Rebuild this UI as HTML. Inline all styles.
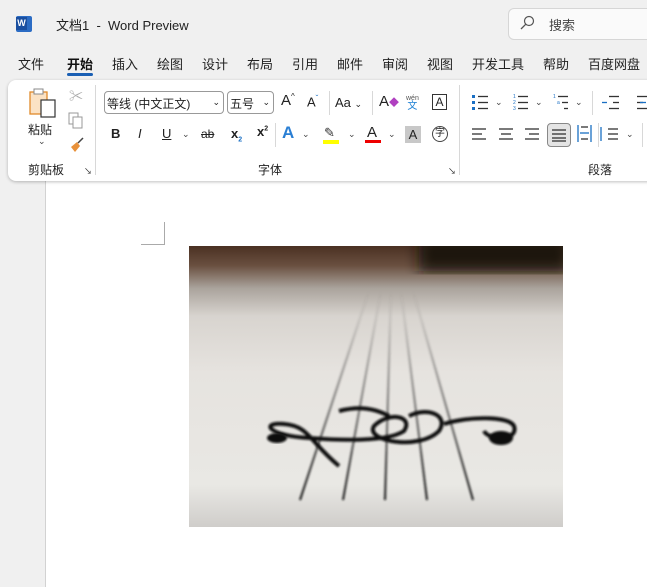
<!DOCTYPE html>
<html><head><meta charset="utf-8"><style>
*{margin:0;padding:0;box-sizing:border-box}
body{width:647px;height:587px;overflow:hidden;background:#f0f0f0;font-family:"Liberation Sans","Noto Sans CJK SC",sans-serif;color:#222;position:relative}
.a{position:absolute;white-space:nowrap}
.tab{position:absolute;top:54px;font-size:13px;color:#222}
.sep{position:absolute;width:1px;background:#d8d8d8}
.dd{position:absolute;font-size:9px;color:#444}
</style></head><body>
<div class="a" style="left:16px;top:16px;width:16px;height:16px;background:#2b6cc4;border-radius:2px"></div>
<div class="a" style="left:16px;top:17px;width:11px;height:13px;background:#1a4fa0;color:#fff;font-size:9px;font-weight:bold;text-align:center;line-height:13px">W</div>
<div class="a" style="left:56px;top:15px;font-size:13px;color:#222">文档1 &nbsp;- &nbsp;Word Preview</div>
<div class="a" style="left:508px;top:8px;width:150px;height:32px;background:#fafafa;border:1px solid #d6d6d6;border-radius:6px"></div>
<svg class="a" style="left:519px;top:15px" width="16" height="16"><circle cx="10" cy="6" r="4.5" fill="none" stroke="#555" stroke-width="1.2"/><line x1="6.8" y1="9.2" x2="2" y2="14" stroke="#555" stroke-width="1.3"/></svg>
<div class="a" style="left:549px;top:15px;font-size:13px;color:#444">搜索</div>
<div class="tab" style="left:18px">文件</div>
<div class="tab" style="left:67px;font-weight:bold;color:#111">开始</div>
<div class="a" style="left:67px;top:73px;width:26px;height:3px;background:#1a5fb4;border-radius:2px"></div>
<div class="tab" style="left:112px">插入</div>
<div class="tab" style="left:157px">绘图</div>
<div class="tab" style="left:202px">设计</div>
<div class="tab" style="left:247px">布局</div>
<div class="tab" style="left:292px">引用</div>
<div class="tab" style="left:337px">邮件</div>
<div class="tab" style="left:382px">审阅</div>
<div class="tab" style="left:427px">视图</div>
<div class="tab" style="left:472px">开发工具</div>
<div class="tab" style="left:543px">帮助</div>
<div class="tab" style="left:588px">百度网盘</div>
<div class="a" style="left:45px;top:181px;width:602px;height:406px;background:#fff;border-left:1px solid #d2d2d2"></div>
<div class="a" style="left:8px;top:80px;width:660px;height:101px;background:#fff;border-radius:8px;box-shadow:0 1px 3px rgba(0,0,0,.25)"></div>
<svg class="a" style="left:29px;top:87px" width="30" height="32"><rect x="1" y="5" width="17" height="22" fill="#fbe2c4" stroke="#e08a2a" stroke-width="1.3"/><rect x="5" y="2" width="9" height="5" fill="#fff" stroke="#888"/><rect x="12" y="13" width="14" height="17" fill="#fff" stroke="#333" stroke-width="1.2"/></svg>
<div class="a" style="left:28px;top:121px;font-size:12px">粘贴</div>
<div class="a" style="left:38px;top:136px;font-size:9px;color:#444">⌄</div>
<div class="a" style="left:69px;top:86px;font-size:14px;color:#aaa">✂</div>
<svg class="a" style="left:68px;top:112px" width="16" height="18"><rect x="1" y="1" width="9" height="11" fill="none" stroke="#999"/><rect x="5" y="5" width="9" height="11" fill="#fff" stroke="#999"/></svg>
<svg class="a" style="left:67px;top:137px" width="18" height="18"><path d="M4 10 L10 5 L13 9 L8 15 Z" fill="#e8913a"/><line x1="11" y1="6" x2="16" y2="1" stroke="#444" stroke-width="1.5"/></svg>
<div class="a" style="left:28px;top:161px;font-size:12px">剪贴板</div>
<div class="a" style="left:84px;top:166px;font-size:8px">↘</div>
<div class="sep" style="left:95px;top:85px;height:90px"></div>
<div class="a" style="left:104px;top:91px;width:120px;height:23px;border:1px solid #999;border-radius:4px;font-size:12px;padding:3px 2px">等线 (中文正文)<span style="position:absolute;right:3px;top:5px;font-size:9px">⌄</span></div>
<div class="a" style="left:227px;top:91px;width:47px;height:23px;border:1px solid #999;border-radius:4px;font-size:12px;padding:3px 2px">五号<span style="position:absolute;right:3px;top:5px;font-size:9px">⌄</span></div>
<div class="a" style="left:281px;top:92px;font-size:15px">A<sup style="font-size:8px">^</sup></div>
<div class="a" style="left:307px;top:94px;font-size:13px">A<sup style="font-size:8px;color:#1a6fc4">ˇ</sup></div>
<div class="sep" style="left:329px;top:91px;height:24px"></div>
<div class="a" style="left:335px;top:95px;font-size:13px">Aa <span style="font-size:9px">⌄</span></div>
<div class="sep" style="left:372px;top:91px;height:24px"></div>
<div class="a" style="left:379px;top:93px;font-size:15px">A<span style="color:#b040c0;font-size:10px">◆</span></div>
<div class="a" style="left:406px;top:95px;font-size:7px;color:#555;line-height:8px;text-align:center">wén<br><span style="font-size:10px;color:#1a7fd4">文</span></div>
<div class="a" style="left:432px;top:94px;width:15px;height:16px;border:1px solid #333;font-size:12px;text-align:center;line-height:14px">A</div>
<div class="a" style="left:111px;top:126px;font-size:13px;font-weight:bold">B</div>
<div class="a" style="left:138px;top:126px;font-size:13px;font-style:italic">I</div>
<div class="a" style="left:162px;top:126px;font-size:13px;text-decoration:underline">U</div>
<div class="dd" style="left:182px;top:129px">⌄</div>
<div class="a" style="left:201px;top:127px;font-size:12px;text-decoration:line-through">ab</div>
<div class="a" style="left:231px;top:126px;font-size:13px;font-weight:bold">x<sub style="font-size:7px;color:#1a6fc4">2</sub></div>
<div class="a" style="left:257px;top:124px;font-size:13px;font-weight:bold">x<sup style="font-size:7px">2</sup></div>
<div class="sep" style="left:275px;top:123px;height:24px"></div>
<div class="a" style="left:282px;top:123px;font-size:17px;font-weight:bold;color:#2a7fd4">A</div>
<div class="dd" style="left:302px;top:129px">⌄</div>
<div class="a" style="left:324px;top:125px;font-size:13px;color:#333">✎</div>
<div class="a" style="left:323px;top:140px;width:16px;height:4px;background:#ff0"></div>
<div class="dd" style="left:348px;top:129px">⌄</div>
<div class="a" style="left:367px;top:124px;font-size:15px">A</div>
<div class="a" style="left:365px;top:140px;width:16px;height:3px;background:#e00"></div>
<div class="dd" style="left:388px;top:129px">⌄</div>
<div class="a" style="left:405px;top:126px;width:16px;height:17px;background:#c8c8c8;font-size:13px;text-align:center;line-height:17px">A</div>
<div class="a" style="left:432px;top:126px;width:16px;height:16px;border:1px solid #444;border-radius:50%;font-size:10px;text-align:center;line-height:14px">字</div>
<div class="a" style="left:258px;top:161px;font-size:12px">字体</div>
<div class="a" style="left:448px;top:166px;font-size:8px">↘</div>
<div class="sep" style="left:459px;top:85px;height:90px"></div>
<svg class="a" style="left:470px;top:92px" width="180" height="55" stroke-width="1.3">
<g fill="#1a6fc4"><rect x="2" y="3" width="3" height="3"/><rect x="2" y="9" width="3" height="3"/><rect x="2" y="15" width="3" height="3"/></g>
<g stroke="#333"><line x1="8" y1="4.5" x2="18" y2="4.5"/><line x1="8" y1="10.5" x2="18" y2="10.5"/><line x1="8" y1="16.5" x2="18" y2="16.5"/>
<line x1="48" y1="4.5" x2="58" y2="4.5"/><line x1="48" y1="10.5" x2="58" y2="10.5"/><line x1="48" y1="16.5" x2="58" y2="16.5"/>
<line x1="88" y1="4.5" x2="98" y2="4.5"/><line x1="92" y1="10.5" x2="98" y2="10.5"/><line x1="94" y1="16.5" x2="98" y2="16.5"/>
<line x1="139" y1="4.5" x2="149" y2="4.5"/><line x1="143" y1="10.5" x2="149" y2="10.5"/><line x1="139" y1="16.5" x2="149" y2="16.5"/>
<line x1="167" y1="4.5" x2="177" y2="4.5"/><line x1="167" y1="10.5" x2="173" y2="10.5"/><line x1="167" y1="16.5" x2="177" y2="16.5"/>
<line x1="2" y1="37" x2="16" y2="37"/><line x1="2" y1="42" x2="12" y2="42"/><line x1="2" y1="47" x2="16" y2="47"/>
<line x1="29" y1="37" x2="43" y2="37"/><line x1="31" y1="42" x2="41" y2="42"/><line x1="29" y1="47" x2="43" y2="47"/>
<line x1="55" y1="37" x2="69" y2="37"/><line x1="59" y1="42" x2="69" y2="42"/><line x1="55" y1="47" x2="69" y2="47"/>
<line x1="138" y1="37" x2="148" y2="37"/><line x1="138" y1="42" x2="148" y2="42"/><line x1="138" y1="47" x2="148" y2="47"/></g>
<g fill="#1a6fc4" font-size="5"><text x="43" y="6">1</text><text x="43" y="12">2</text><text x="43" y="18">3</text><text x="83" y="6">1</text><text x="87" y="12">a</text></g>
<g stroke="#1a6fc4"><line x1="132" y1="10.5" x2="137" y2="10.5"/><line x1="170" y1="10.5" x2="176" y2="10.5"/><line x1="108" y1="33" x2="108" y2="50"/><line x1="121" y1="33" x2="121" y2="50"/><line x1="110" y1="41" x2="119" y2="41"/><line x1="131" y1="35" x2="131" y2="49"/></g>
<g stroke="#333"><line x1="111" y1="35" x2="118" y2="35"/><line x1="111" y1="47" x2="118" y2="47"/></g>
</svg>
<div class="dd" style="left:495px;top:97px">⌄</div><div class="dd" style="left:535px;top:97px">⌄</div><div class="dd" style="left:575px;top:97px">⌄</div>
<div class="sep" style="left:592px;top:91px;height:24px"></div>
<div class="a" style="left:547px;top:123px;width:24px;height:24px;border:1px solid #888;border-radius:4px;background:#e4e4e4"></div>
<svg class="a" style="left:551px;top:128px" width="16" height="14" stroke="#333" stroke-width="1.3"><line x1="1" y1="2" x2="15" y2="2"/><line x1="1" y1="6" x2="15" y2="6"/><line x1="1" y1="10" x2="15" y2="10"/><line x1="1" y1="13" x2="15" y2="13"/></svg>
<div class="sep" style="left:598px;top:123px;height:24px"></div>
<div class="dd" style="left:626px;top:129px">⌄</div>
<div class="sep" style="left:642px;top:123px;height:24px"></div>
<div class="a" style="left:588px;top:161px;font-size:12px">段落</div>
<div class="a" style="left:141px;top:244px;width:24px;height:1px;background:#aaa"></div>
<div class="a" style="left:164px;top:222px;width:1px;height:23px;background:#aaa"></div>
<svg class="a" style="left:189px;top:246px" width="374" height="281" viewBox="0 0 374 281">
<defs>
<linearGradient id="g" x1="0" y1="0" x2="0" y2="1"><stop offset="0" stop-color="#4a3022"/><stop offset=".07" stop-color="#6a5040"/><stop offset=".15" stop-color="#aaa39c"/><stop offset=".25" stop-color="#d8d4cf"/><stop offset=".45" stop-color="#e6e3df"/><stop offset=".85" stop-color="#e9e8e4"/><stop offset="1" stop-color="#cfcdca"/></linearGradient>
<filter id="b"><feGaussianBlur stdDeviation="1"/></filter>
<filter id="b2"><feGaussianBlur stdDeviation="7"/></filter>
<linearGradient id="f" x1="0" y1="0" x2="0" y2="1"><stop offset="0" stop-color="#555" stop-opacity="0"/><stop offset=".35" stop-color="#333" stop-opacity=".4"/><stop offset="1" stop-color="#111"/></linearGradient>
</defs>
<rect width="374" height="281" fill="url(#g)"/>
<rect x="230" y="-10" width="150" height="35" fill="#1a1210" filter="url(#b2)"/>
<g stroke="url(#f)" stroke-width="2" fill="none" filter="url(#b)">
<line x1="180" y1="45" x2="111" y2="254"/><line x1="192" y1="45" x2="154" y2="254"/><line x1="202" y1="45" x2="196" y2="254"/><line x1="212" y1="45" x2="238" y2="254"/><line x1="224" y1="45" x2="284" y2="254"/>
</g>
<g stroke="#111" stroke-width="4" fill="none" filter="url(#b)">
<path d="M150 220 C 120 195, 120 180, 95 178 C 70 176, 80 190, 120 192 C 160 195, 200 195, 215 185 C 225 170, 200 165, 185 180 C 175 195, 230 205, 250 185 C 260 170, 240 160, 220 170"/>
<path d="M255 178 C 280 170, 320 170, 325 180 C 330 195, 300 195, 295 185"/>
<path d="M150 165 C 170 160, 185 162, 200 170"/>
</g>
<ellipse cx="88" cy="192" rx="10" ry="5" fill="#111" filter="url(#b)"/>
<ellipse cx="312" cy="192" rx="12" ry="7" fill="#111" filter="url(#b)"/>
</svg>
</body></html>
